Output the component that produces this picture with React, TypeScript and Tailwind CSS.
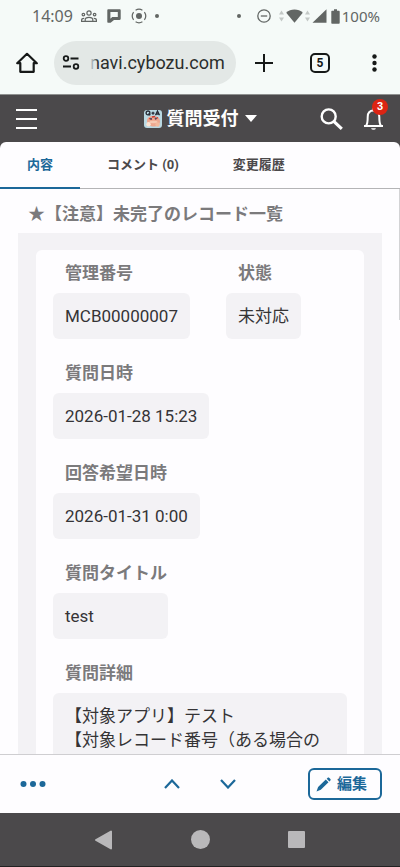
import { useState } from "react";
import type { ReactNode } from "react";

const TrafficArrows = () => (
  <svg className="h-3 w-[5px]" viewBox="0 0 5 12" fill="#c3c8c6">
    <path d="M2.5.5 5 4.5H0zM2.5 11.5 0 7.5h5z" />
  </svg>
);

const StatusBar = () => (
  <div className="flex h-8 items-center justify-between pl-8 pr-5 text-[#626664]">
    <div className="flex items-center">
      <span className="font-['Noto_Sans',sans-serif] text-base leading-none">14:09</span>
      <svg className="ml-2 h-4 w-4" viewBox="0 0 16 16" fill="none" stroke="currentColor" strokeWidth="1.2">
        <circle cx="8" cy="5" r="2.1" />
        <circle cx="2.4" cy="6.6" r="1.3" />
        <circle cx="13.6" cy="6.6" r="1.3" />
        <path d="M4.2 13.4v-1.6c0-1.6 1.8-2.4 3.8-2.4s3.8.8 3.8 2.4v1.6zM4 13.4H.6v-1.2c0-1.2 1-1.8 2.6-1.8M12 13.4h3.4v-1.2c0-1.2-1-1.8-2.6-1.8" />
      </svg>
      <svg className="ml-2.5 h-[14px] w-[14px]" viewBox="0 0 14 14" fill="currentColor">
        <path
          fillRule="evenodd"
          d="M1.4.3h11.2c.7 0 1.1.4 1.1 1.1v8.4c0 .7-.4 1.1-1.1 1.1H7L3.6 13.8H1.4c-.7 0-1.1-.4-1.1-1.1V1.4C.3.7.7.3 1.4.3zM3.4 3v6.8l1.8-1.9h5.6V3z"
        />
      </svg>
      <svg className="ml-2.5 h-4 w-4" viewBox="0 0 16 16" fill="none" stroke="currentColor" strokeWidth="1.2">
        <circle cx="8" cy="8" r="3" fill="currentColor" stroke="none" />
        <path d="M4.6 2.2a6.7 6.7 0 0 1 6.8 0M13.4 4.1a6.7 6.7 0 0 1 0 7.8M11.4 13.8a6.7 6.7 0 0 1-6.8 0M2.6 11.9a6.7 6.7 0 0 1 0-7.8" />
      </svg>
      <span className="ml-2 h-1 w-1 rounded-full bg-[#626664]" />
    </div>
    <div className="flex items-center">
      <span className="mr-4 h-1 w-1 rounded-full bg-[#626664]" />
      <svg className="mr-2 h-[14px] w-[14px]" viewBox="0 0 14 14" fill="none" stroke="currentColor" strokeWidth="1.3">
        <circle cx="7" cy="7" r="6.2" />
        <path d="M3.8 7h6.4" />
      </svg>
      <TrafficArrows />
      <svg className="mx-0.5 h-[14px] w-[17px]" viewBox="0 0 17 14" fill="currentColor">
        <path d="M8.5 13.8.2 3.7C2.5 1.6 5.3.5 8.5.5s6 1.1 8.3 3.2z" />
      </svg>
      <TrafficArrows />
      <svg className="ml-0.5 h-[14px] w-[15px]" viewBox="0 0 15 14" fill="currentColor">
        <path d="M14.5.3v13.4H.5z" />
      </svg>
      <svg className="ml-1 h-[15px] w-[9px]" viewBox="0 0 9 15" fill="currentColor">
        <path d="M3 .3h3v1.5h1.7c.6 0 1 .4 1 1v11c0 .6-.4 1-1 1H1.3c-.6 0-1-.4-1-1v-11c0-.6.4-1 1-1H3z" />
      </svg>
      <span className="ml-0.5 font-['Noto_Sans',sans-serif] text-[15px] leading-none">100%</span>
    </div>
  </div>
);

const AddressBar = () => (
  <div className="flex h-[62px] items-center text-[#161918]">
    <button type="button" aria-label="ホーム" className="flex w-[54px] justify-center">
      <svg className="h-[22px] w-[22px]" viewBox="0 0 22 22" fill="none" stroke="currentColor" strokeWidth="2.2" strokeLinejoin="round">
        <path d="M1.2 11.2 11 1.8l9.8 9.4h-3.1v8.6H4.3v-8.6z" />
      </svg>
    </button>
    <div className="flex h-11 min-w-0 flex-1 items-center rounded-full bg-[#e3e8e6] pl-2">
      <svg className="h-[18px] w-[18px] shrink-0" viewBox="0 0 18 18" fill="none" stroke="currentColor" strokeWidth="1.8">
        <circle cx="4" cy="4.5" r="2.3" />
        <circle cx="14" cy="12.5" r="2.3" />
        <path d="M8.5 4.5h8M1 12.5h8" />
      </svg>
      <div className="relative ml-2.5 min-w-0 flex-1">
        <input
          aria-label="アドレス"
          readOnly
          value="navi.cybozu.com"
          className="w-full bg-transparent font-[Roboto,sans-serif] text-lg text-[#2b2e2d] outline-none"
        />
        <span className="absolute left-0 top-0 h-full w-2 bg-linear-to-r from-[#e3e8e6] to-transparent" />
      </div>
    </div>
    <button type="button" aria-label="新しいタブ" className="flex w-14 justify-center">
      <svg className="h-[18px] w-[18px]" viewBox="0 0 18 18" stroke="currentColor" strokeWidth="2">
        <path d="M9 0v18M0 9h18" />
      </svg>
    </button>
    <button type="button" aria-label="タブ一覧" className="flex w-14 justify-center">
      <span className="flex h-5 w-5 items-center justify-center rounded-[5px] border-2 border-[#161918] font-[Roboto,sans-serif] text-xs font-bold leading-none">
        5
      </span>
    </button>
    <button type="button" aria-label="メニュー" className="flex w-[52px] justify-center">
      <svg className="h-[18px] w-[5px]" viewBox="0 0 5 18" fill="currentColor">
        <circle cx="2.5" cy="2.5" r="2.2" />
        <circle cx="2.5" cy="9" r="2.2" />
        <circle cx="2.5" cy="15.5" r="2.2" />
      </svg>
    </button>
  </div>
);

const AppIcon = () => (
  <svg className="h-[18px] w-[18px]" viewBox="0 0 18 18">
    <rect width="18" height="18" rx="3" fill="#b9d8e2" />
    <path d="M3 11c0-3.5 2.5-5 6-5s7 1.5 7 5.5c0 2.5-2.5 5-6.5 5S3 14 3 11z" fill="#eda78f" />
    <ellipse cx="9.5" cy="12" rx="4" ry="1.2" fill="#f5c9b2" />
    <path d="M5 8.5l3 1M14 7.5l-3 1.7M8 7l3-.5" stroke="#c9382f" strokeWidth="1.3" fill="none" />
    <circle cx="7" cy="8.8" r="1" fill="#40506b" />
    <circle cx="11.7" cy="8.5" r="1" fill="#40506b" />
    <circle cx="4.5" cy="14.3" r="2.2" fill="#fbe3d2" />
    <circle cx="13.5" cy="14.5" r="2.2" fill="#f3b99c" />
    <circle cx="4" cy="2.9" r="1.9" fill="none" stroke="#252a35" strokeWidth="1.3" />
    <path d="M4.5 3.5 6.3 5.3M11.5 5.3l2-4.3 2 4.3M12.3 4h2.4M7.5 3.2h3M9 1.7v3" stroke="#252a35" strokeWidth="1.3" fill="none" />
  </svg>
);

const AppHeader = () => (
  <header className="flex h-12 items-center border-t border-[#8f9190] bg-[#4b494b] text-white">
    <button type="button" aria-label="メニューを開く" className="flex w-[93px] pl-4">
      <svg className="h-[22px] w-[21px]" viewBox="0 0 21 22" stroke="currentColor" strokeWidth="2">
        <path d="M0 2h21M0 11h21M0 20h21" />
      </svg>
    </button>
    <button type="button" className="flex flex-1 items-center justify-center">
      <AppIcon />
      <span className="ml-[5px] text-lg font-bold leading-6">質問受付</span>
      <svg className="ml-1.5 h-[7px] w-3" viewBox="0 0 12 7" fill="currentColor">
        <path d="M0 0h12L6 7z" />
      </svg>
    </button>
    <div className="flex w-[93px] items-center justify-end gap-5 pr-4">
      <button type="button" aria-label="検索">
        <svg className="h-[22px] w-[23px]" viewBox="0 0 23 22" fill="none" stroke="currentColor">
          <circle cx="8.7" cy="8.4" r="7" strokeWidth="2.4" />
          <path d="m13.8 13.3 8 7.5" strokeWidth="3.2" />
        </svg>
      </button>
      <button type="button" aria-label="通知" className="relative">
        <svg className="h-6 w-[21px]" viewBox="0 0 21 24" fill="none" stroke="currentColor" strokeWidth="2">
          <path d="M1 19h19M3.2 18.5c1.3-1.6 1.5-3 1.5-8.5 0-4 2.3-6.5 5.8-6.5s5.8 2.5 5.8 6.5c0 5.5.2 6.9 1.5 8.5" />
          <path d="M8 21.2a2.6 2.3 0 0 0 5 0z" fill="currentColor" stroke="none" />
          <path d="M10.5 1v3" />
        </svg>
        <span className="absolute -right-1 -top-2 flex h-4 w-4 items-center justify-center rounded-full bg-[#dc2413] font-['Liberation_Sans',sans-serif] text-[11px] font-bold leading-none">
          3
        </span>
      </button>
    </div>
  </header>
);

const tabs = ["内容", "コメント (0)", "変更履歴"];

const Tabs = () => {
  const [active, setActive] = useState(0);

  return (
    <div className="bg-[#4b494b]">
      <nav className="flex h-[47px] rounded-t-md border-b border-[#b4b4b6] bg-[#fefdff]">
        {tabs.map((tab, i) => (
          <button
            key={tab}
            type="button"
            onClick={() => setActive(i)}
            className={
              i === active
                ? "h-[47px] border-b-2 border-[#1c6899] px-[27px] text-[13px] font-bold text-[#1c6899]"
                : "h-[47px] border-b-2 border-transparent px-[27px] text-[13px] font-bold text-[#4b494b]"
            }
          >
            {tab}
          </button>
        ))}
      </nav>
    </div>
  );
};

const Field = ({ label, wide, children }: { label: string; wide?: boolean; children: ReactNode }) => (
  <div>
    <dt className="mb-2 pl-3 text-[17px] font-bold leading-6 text-[#7b7a7c]">{label}</dt>
    <dd
      className={
        wide
          ? "rounded-md bg-[#f3f2f5] px-3 py-[11px] text-[17px] leading-6 text-[#353436]"
          : "w-fit min-w-0 rounded-md bg-[#f3f2f5] px-3 py-[11px] text-[17px] leading-6 text-[#353436]"
      }
    >
      {children}
    </dd>
  </div>
);

const Record = () => (
  <main className="relative min-h-0 flex-1 overflow-hidden bg-[#fefdff]">
    <h1 className="pb-[7px] pl-7 pt-[13px] text-[17px] font-bold leading-6 text-[#7b7a7c]">
      ★【注意】未完了のレコード一覧
    </h1>
    <div className="mx-[18px] bg-[#f3f2f5] px-[18px] pt-[17px]">
      <dl className="flex flex-col gap-[22px] rounded-t-md bg-[#fefdff] px-[17px] pt-[11px]">
        <div className="flex gap-9">
          <Field label="管理番号">MCB00000007</Field>
          <Field label="状態">未対応</Field>
        </div>
        <Field label="質問日時">2026-01-28 15:23</Field>
        <Field label="回答希望日時">2026-01-31 0:00</Field>
        <Field label="質問タイトル">
          <span className="block min-w-[91px]">test</span>
        </Field>
        <Field label="質問詳細" wide>
          <p>【対象アプリ】テスト</p>
          <p>【対象レコード番号（ある場合の</p>
        </Field>
      </dl>
    </div>
    <span className="absolute right-0 top-0 h-[131px] w-px bg-[#d3d3d5]" />
  </main>
);

const ActionBar = () => (
  <div className="flex h-[59px] items-center justify-between border-t border-[#cfced1] bg-[#fefdff] pl-5 pr-[18px] text-[#1c6899]">
    <button type="button" aria-label="その他" className="w-[72px]">
      <svg className="h-1.5 w-[26px]" viewBox="0 0 26 6" fill="currentColor">
        <circle cx="3.5" cy="3" r="3" />
        <circle cx="13" cy="3" r="3" />
        <circle cx="22.5" cy="3" r="3" />
      </svg>
    </button>
    <div className="flex gap-10">
      <button type="button" aria-label="前のレコード">
        <svg className="h-[10px] w-4" viewBox="0 0 16 10" fill="none" stroke="currentColor" strokeWidth="2.2">
          <path d="m1 9 7-7.5L15 9" />
        </svg>
      </button>
      <button type="button" aria-label="次のレコード">
        <svg className="h-[10px] w-4" viewBox="0 0 16 10" fill="none" stroke="currentColor" strokeWidth="2.2">
          <path d="m1 1 7 7.5L15 1" />
        </svg>
      </button>
    </div>
    <button
      type="button"
      className="flex h-8 w-[74px] items-center gap-1.5 rounded-md border-2 border-[#1c6899] pl-1.5 text-[15px] font-bold"
    >
      <svg className="h-[15px] w-[15px]" viewBox="0 0 15 15" fill="currentColor">
        <path d="m.5 14.5 1.6-4.4 7.700-7.500 2.700 2.700-7.700 7.500zM10.700 1.700l1-1c.4-.4 1-.4 1.400 0l1.300 1.300c.4.4.4 1 0 1.400l-1 1z" />
      </svg>
      編集
    </button>
  </div>
);

const SystemNav = () => (
  <div className="flex h-[54px] items-center justify-between border-b border-[#222122] bg-[#4b494b] px-[95px] text-[#b9b8ba]">
    <button type="button" aria-label="戻る">
      <svg className="h-5 w-[17px]" viewBox="0 0 17 20" fill="currentColor" stroke="currentColor" strokeWidth="2" strokeLinejoin="round">
        <path d="M1 10 16 1.5v17z" />
      </svg>
    </button>
    <button type="button" aria-label="ホーム画面" className="h-[19px] w-[19px] rounded-full bg-[#b9b8ba]" />
    <button type="button" aria-label="アプリ履歴" className="h-[17px] w-[17px] rounded-[1px] bg-[#b9b8ba]" />
  </div>
);

const App = () => (
  <div className="flex h-screen flex-col overflow-hidden font-[Roboto,'Noto_Sans_CJK_JP',sans-serif]">
    <div className="bg-[#f5faf8]">
      <StatusBar />
      <AddressBar />
    </div>
    <AppHeader />
    <Tabs />
    <Record />
    <ActionBar />
    <SystemNav />
  </div>
);

export default App;
